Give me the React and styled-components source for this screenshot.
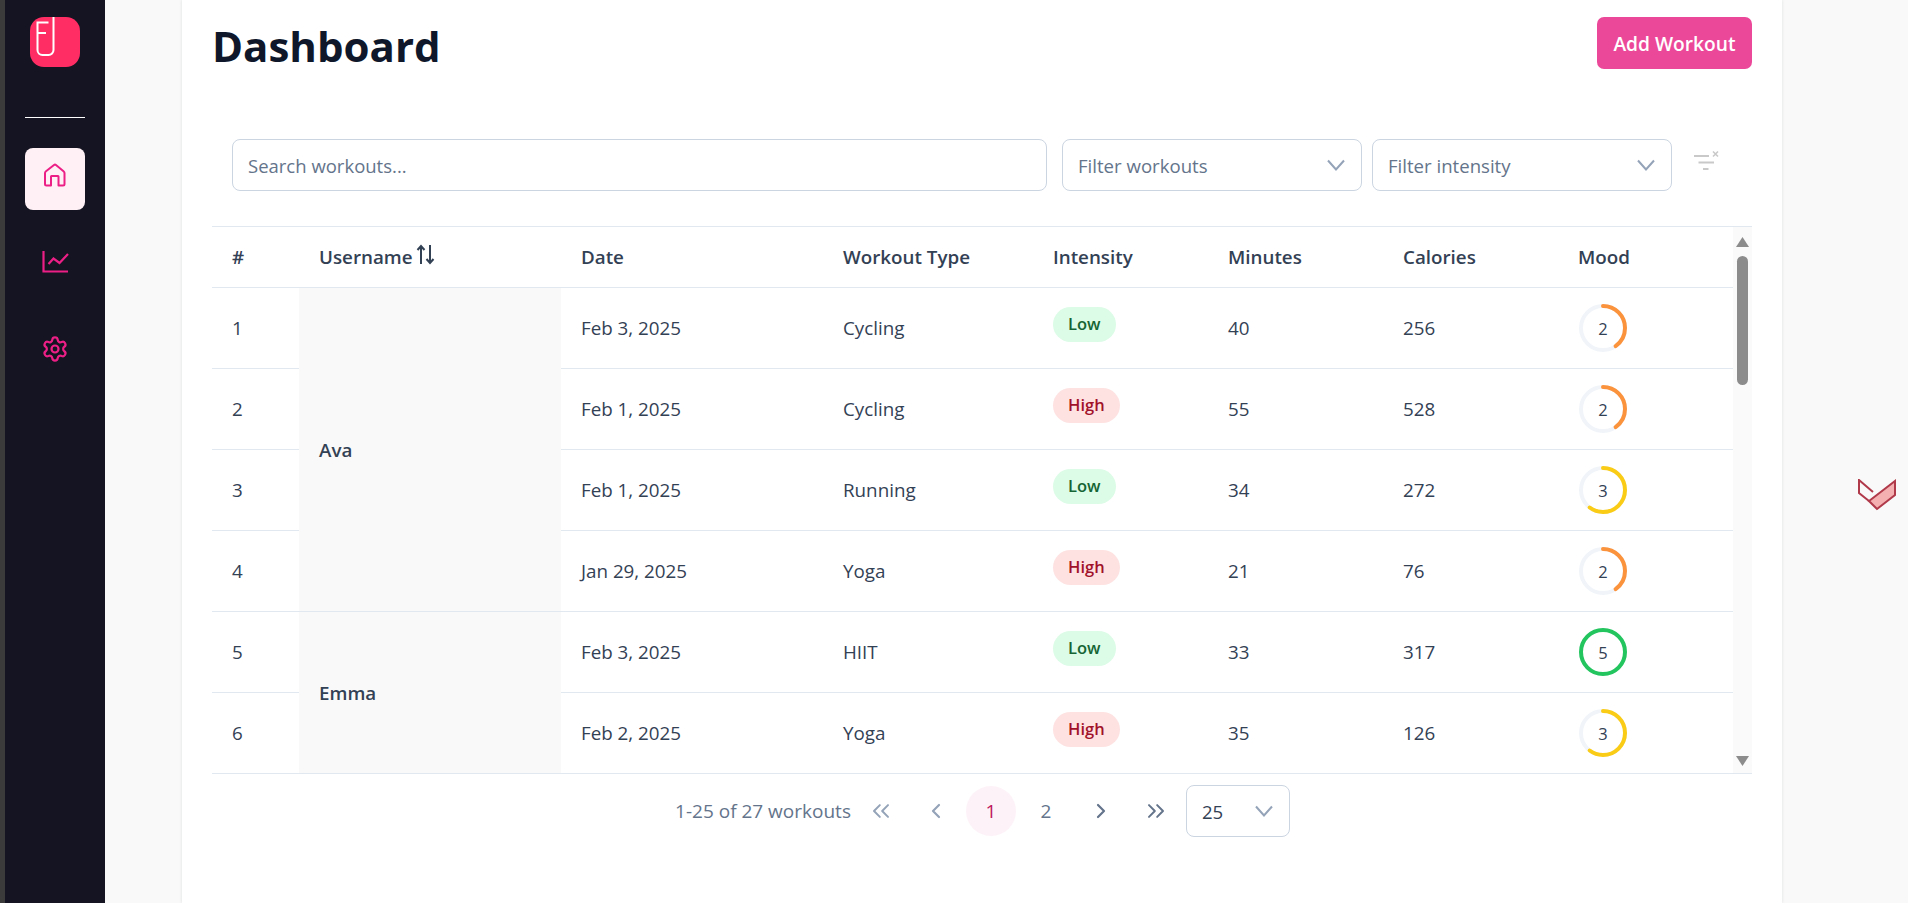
import React from 'react'
import styled, { createGlobalStyle } from 'styled-components'
import { ChevronLeft, ChevronRight, ChevronsLeft, ChevronsRight, Settings } from 'lucide-react'

const Global = createGlobalStyle`
  * { box-sizing: border-box; }
  html, body { margin: 0; padding: 0; height: 100%; overflow: hidden; }
  body { font-family: "Open Sans", "Noto Sans", sans-serif; color: #334155; background: #f9f9f9; }
`

const Page = styled.div`
  display: flex;
  height: 903px;
  overflow: hidden;
`
const Strip = styled.div`
  width: 5px;
  background: #3b3b3b;
`
const Sidebar = styled.nav`
  width: 100px;
  background: #141422;
  display: flex;
  flex-direction: column;
  align-items: center;
  padding-top: 17px;
`
const LogoTile = styled.div`
  width: 50px;
  height: 50px;
  border-radius: 14px;
  background: #ff2d64;
`
const Divider = styled.div`
  width: 60px;
  height: 1px;
  background: #fff;
  margin: 50px 0 30px;
`
const NavList = styled.div`
  display: flex;
  flex-direction: column;
  gap: 25px;
`
const NavItem = styled.div`
  width: 60px;
  height: 62px;
  border-radius: 8px;
  padding-bottom: 8px;
  display: flex;
  align-items: center;
  justify-content: center;
  color: #ec1f86;
  background: ${p => (p.$active ? '#fef0f5' : 'transparent')};
`
const Main = styled.main`
  flex: 1;
  position: relative;
  padding-left: 77px;
  background: #f9f9f9;
`
const Card = styled.section`
  width: 1600px;
  height: 903px;
  background: #fff;
  padding: 17px 30px 0;
  box-shadow: 0 0 3px rgba(15, 23, 42, 0.12);
`
const Header = styled.header`
  display: flex;
  justify-content: space-between;
  align-items: center;
  height: 52px;
`
const Title = styled.h1`
  margin: 0;
  padding-top: 4px;
  font-size: 42px;
  font-weight: 700;
  color: #0f172a;
`
const AddButton = styled.button`
  width: 155px;
  height: 52px;
  border: 0;
  border-radius: 7px;
  background: #ec4899;
  color: #fff;
  font: 600 19.2px "Open Sans", sans-serif;
`
const Toolbar = styled.div`
  display: flex;
  align-items: flex-start;
  gap: 10px;
  margin: 70px 0 35px 20px;
`
const SearchBox = styled.div`
  width: 815px;
  height: 52px;
  margin-right: 5px;
  padding: 0 15px;
  display: flex;
  align-items: center;
  border: 1px solid #cbd5e1;
  border-radius: 8px;
  font-size: 18.5px;
  color: #64748b;
`
const SelectBox = styled.div`
  width: ${p => p.$width || 300}px;
  height: 52px;
  padding: 0 15px;
  display: flex;
  align-items: center;
  justify-content: space-between;
  border: 1px solid #cbd5e1;
  border-radius: 8px;
  font-size: 18.6px;
  color: ${p => (p.$filled ? '#334155' : '#64748b')};
`
const Caret = styled.svg`
  flex: none;
  margin-right: 1px;
`
const ClearIcon = styled.svg`
  margin: 10px 0 0 11px;
`
const Frame = styled.div`
  display: flex;
  height: 548px;
  border-top: 1px solid #e2e8f0;
  border-bottom: 1px solid #e2e8f0;
`
const Table = styled.table`
  width: 1521px;
  table-layout: fixed;
  border-collapse: separate;
  border-spacing: 0;
  font-size: 18.8px;
`
const Th = styled.th`
  height: 61px;
  padding: 0 20px;
  text-align: left;
  font-weight: 600;
  color: #334155;
  border-bottom: 1px solid #e2e8f0;
  white-space: nowrap;
  svg { vertical-align: -1px; margin-left: 3px; }
`
const Td = styled.td`
  height: ${p => (p.$last ? 80 : 81)}px;
  padding: 0 20px;
  color: #334155;
  border-bottom: ${p => (p.$last ? 0 : '1px solid #e2e8f0')};
`
const UserCell = styled(Td)`
  height: auto;
  background: #f9f9f9;
  font-weight: 600;
`
const Badge = styled.span`
  display: inline-block;
  height: 35px;
  line-height: 33px;
  padding: 0 15px;
  margin-bottom: 7px;
  border-radius: 18px;
  font-size: 16.5px;
  font-weight: 600;
  background: ${p => (p.$level === 'High' ? '#fee2e2' : '#dcfce7')};
  color: ${p => (p.$level === 'High' ? '#a1122a' : '#166534')};
`
const Ring = styled.div`
  position: relative;
  width: 48px;
  height: 48px;
  margin-left: 1px;
  display: flex;
  align-items: center;
  justify-content: center;
  font-size: 16.5px;
  font-weight: 500;
  svg { position: absolute; inset: 0; transform: rotate(-90deg); }
`
const Rail = styled.div`
  width: 19px;
  background: #fafafa;
  display: flex;
  flex-direction: column;
  align-items: center;
  padding: 10px 0 7px;
  color: #8c8c8c;
`
const Thumb = styled.div`
  width: 11px;
  height: 129px;
  margin-top: 9px;
  border-radius: 6px;
  background: #8c8c8c;
`
const RailArrow = styled.svg`
  margin-top: ${p => (p.$bottom ? 'auto' : 0)};
  transform: ${p => (p.$bottom ? 'rotate(180deg)' : 'none')};
`
const Pager = styled.div`
  display: flex;
  align-items: center;
  justify-content: center;
  gap: 5px;
  margin-top: 11px;
  padding-left: 1px;
`
const PagerText = styled.span`
  font-size: 19px;
  color: #64748b;
`
const PageButton = styled.div`
  width: 50px;
  height: 50px;
  border-radius: 50%;
  display: flex;
  align-items: center;
  justify-content: center;
  font-size: 19px;
  color: ${p => (p.$active ? '#be185d' : p.$off ? '#94a3b8' : '#64748b')};
  background: ${p => (p.$active ? '#fdf2f8' : 'transparent')};
`
const Mark = styled.svg`
  position: absolute;
  left: 1753px;
  top: 479px;
`

const rows = [
  [1, 'Feb 3, 2025', 'Cycling', 'Low', 40, 256, 2],
  [2, 'Feb 1, 2025', 'Cycling', 'High', 55, 528, 2],
  [3, 'Feb 1, 2025', 'Running', 'Low', 34, 272, 3],
  [4, 'Jan 29, 2025', 'Yoga', 'High', 21, 76, 2],
  [5, 'Feb 3, 2025', 'HIIT', 'Low', 33, 317, 5],
  [6, 'Feb 2, 2025', 'Yoga', 'High', 35, 126, 3],
]
const users = { 1: ['Ava', 4], 5: ['Emma', 2] }
const moodColor = { 2: '#fb923c', 3: '#facc15', 5: '#22c55e' }
const columns = [87, 262, 262, 210, 175, 175, 175, 175]

const Mood = ({ value }) => {
  const r = 22
  const len = 2 * Math.PI * r
  return (
    <Ring>
      <svg width="48" height="48">
        <circle cx="24" cy="24" r={r} fill="none" stroke="#f1f5f9" strokeWidth="4" />
        <circle
          cx="24"
          cy="24"
          r={r}
          fill="none"
          stroke={moodColor[value]}
          strokeWidth="4"
          strokeLinecap="round"
          strokeDasharray={`${(len * value) / 5} ${len}`}
        />
      </svg>
      {value}
    </Ring>
  )
}

const Chevron = () => (
  <Caret width="18" height="12" fill="none" stroke="#94a3b8" strokeWidth="2">
    <path d="M1 1.500L9 10.500L17 1.500" />
  </Caret>
)

const App = () => {
  return (
    <>
      <Global />
      <Page>
        <Strip />
        <Sidebar>
          <LogoTile>
            <svg width="50" height="50" fill="none" stroke="#fff" strokeWidth="2">
              <path d="M18.5 5.5H7.5V33a5 5 0 0 0 5 5H18.5a5 5 0 0 0 5-5V0M7.5 16H16" />
            </svg>
          </LogoTile>
          <Divider />
          <NavList>
            <NavItem $active>
              <svg width="24" height="24" fill="none" stroke="currentColor" strokeWidth="2" strokeLinejoin="round">
                <path d="M2 21V10Q2 9 3 8.2L11 2Q12 1.2 13 2L20.500 8.200Q21.500 9 21.500 10V21Q21.500 22.500 20 22.500H15.500V13.500Q15.500 13 15 13H8.500Q8 13 8 13.500V22.500H3.500Q2 22.500 2 21Z" />
              </svg>
            </NavItem>
            <NavItem>
              <svg width="30" height="30" fill="none" stroke="currentColor" strokeWidth="2.2">
                <path d="M3.500 4V24.500H28M8.500 17L13.500 11.500L19.500 16L28 7" />
              </svg>
            </NavItem>
            <NavItem>
              <Settings size={28} strokeWidth={1.9} />
            </NavItem>
          </NavList>
        </Sidebar>
        <Main>
          <Card>
            <Header>
              <Title>Dashboard</Title>
              <AddButton>Add Workout</AddButton>
            </Header>
            <Toolbar>
              <SearchBox>Search workouts...</SearchBox>
              <SelectBox>
                Filter workouts
                <Chevron />
              </SelectBox>
              <SelectBox>
                Filter intensity
                <Chevron />
              </SelectBox>
              <ClearIcon width="27" height="22" fill="none" stroke="#c9c9c9" strokeWidth="2">
                <path d="M1 7H16M5.500 13.500H21M10 20H15.500" />
                <path d="M20 2.500L25 7.500M25 2.500L20 7.500" strokeWidth="1.600" />
              </ClearIcon>
            </Toolbar>
            <Frame>
              <Table>
                <colgroup>
                  {columns.map((w, i) => (
                    <col key={i} width={w} />
                  ))}
                </colgroup>
                <thead>
                  <tr>
                    <Th>#</Th>
                    <Th>
                      Username
                      <svg width="20" height="21" fill="none" stroke="#334155" strokeWidth="2">
                        <path d="M5 20V2M1.500 6L5 2L8.500 6M14 1V19M10.500 15L14 19L17.500 15" />
                      </svg>
                    </Th>
                    <Th>Date</Th>
                    <Th>Workout Type</Th>
                    <Th>Intensity</Th>
                    <Th>Minutes</Th>
                    <Th>Calories</Th>
                    <Th>Mood</Th>
                  </tr>
                </thead>
                <tbody>
                  {rows.map((row, i) => {
                    const last = i === rows.length - 1
                    const user = users[row[0]]
                    return (
                      <tr key={row[0]}>
                        <Td $last={last}>{row[0]}</Td>
                        {user && (
                          <UserCell rowSpan={user[1]} $last={row[0] === 5}>
                            {user[0]}
                          </UserCell>
                        )}
                        <Td $last={last}>{row[1]}</Td>
                        <Td $last={last}>{row[2]}</Td>
                        <Td $last={last}>
                          <Badge $level={row[3]}>{row[3]}</Badge>
                        </Td>
                        <Td $last={last}>{row[4]}</Td>
                        <Td $last={last}>{row[5]}</Td>
                        <Td $last={last}>
                          <Mood value={row[6]} />
                        </Td>
                      </tr>
                    )
                  })}
                </tbody>
              </Table>
              <Rail>
                <RailArrow width="13" height="10" fill="currentColor">
                  <path d="M6.500 0L13 10H0Z" />
                </RailArrow>
                <Thumb />
                <RailArrow $bottom width="13" height="10" fill="currentColor">
                  <path d="M6.500 0L13 10H0Z" />
                </RailArrow>
              </Rail>
            </Frame>
            <Pager>
              <PagerText>1-25 of 27 workouts</PagerText>
              <PageButton $off>
                <ChevronsLeft size={28} strokeWidth={1.7} />
              </PageButton>
              <PageButton $off>
                <ChevronLeft size={24} strokeWidth={2.2} />
              </PageButton>
              <PageButton $active>1</PageButton>
              <PageButton>2</PageButton>
              <PageButton>
                <ChevronRight size={24} strokeWidth={2.2} />
              </PageButton>
              <PageButton>
                <ChevronsRight size={28} strokeWidth={1.7} />
              </PageButton>
              <SelectBox $width={104} $filled>
                25
                <Chevron />
              </SelectBox>
            </Pager>
          </Card>
          <Mark width="38" height="32" fill="none" stroke="#b0394a" strokeWidth="2">
            <path d="M19 30L37 16V2L11 22Z" fill="#f4b0b0" />
            <path d="M11 22L1 14V1L15 13" />
          </Mark>
        </Main>
      </Page>
    </>
  )
}

export default App
